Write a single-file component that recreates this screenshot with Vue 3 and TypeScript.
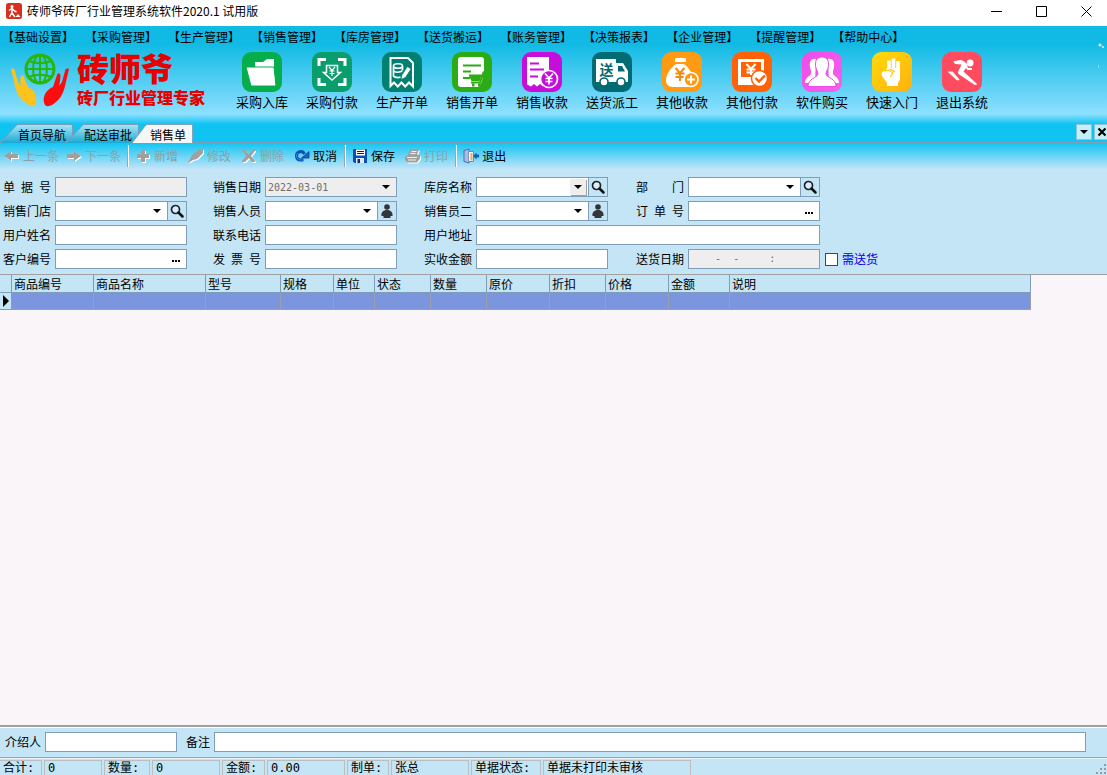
<script setup lang="ts">
import { ref } from 'vue'

interface Shape {
  d: string
  fill?: string
  stroke?: string
  width?: number
}

interface Glyph {
  t: string
  x: number
  y: number
  size: number
  fill: string
}

interface Tool {
  label: string
  from: string
  to: string
  shapes: Shape[]
  glyphs?: Glyph[]
}

interface Action {
  label: string
  icon: string
  disabled: boolean
}

type Kind = 'text' | 'select' | 'search' | 'person' | 'more'

interface Field {
  id: string
  label: string
  kind: Kind
  value?: string
  disabled?: boolean
  raised?: boolean
  wide?: boolean
}

const menus: string[] = [
  '基础设置', '采购管理', '生产管理', '销售管理', '库房管理', '送货搬运',
  '账务管理', '决策报表', '企业管理', '提醒管理', '帮助中心',
]

const W = '#fff'

const tools: Tool[] = [
  {
    label: '采购入库', from: '#06ad4d', to: '#06ad4d',
    shapes: [
      { d: 'M13 14V10h8l4-3h7v23h-4z', fill: W },
      { d: 'M4 15h28l2 19H9z', fill: W, stroke: '#06ad4d', width: 1 },
    ],
  },
  {
    label: '采购付款', from: '#0a9e6c', to: '#0a9e6c',
    shapes: [
      { d: 'M7 14V7.500h7M26 7.500h7V14M33 26v6.500h-7M14 32.500H7V26', stroke: W, width: 3 },
      { d: 'M14.500 13.500h11v7h3L20 28l-8.500-7.500h3z', stroke: W, width: 1.5 },
      { d: 'M17 15l3 3.500 3-3.500M20 18.500V24M17.500 19h5M17.500 21.500h5', stroke: W, width: 1.2 },
    ],
  },
  {
    label: '生产开单', from: '#008070', to: '#008070',
    shapes: [
      { d: 'M8.500 6h17.500l5 5v23.500l-4-4-3.800 4-3.700-4-3.700 4-3.800-4-3.500 3.500z', stroke: W, width: 2 },
      { d: 'M11.500 14c0-3 9-3 9 0s-9 3-9 0v9.500c0 2 5 2.500 7 1.500M20.500 14v4M11.500 18.500c1 2.300 7 2.300 9 0', stroke: W, width: 1.7 },
      { d: 'M25.500 14.500l3.500 2.500-5.500 8.500-4.500 2 .8-4.600z', fill: W, stroke: '#008070', width: 0.8 },
    ],
  },
  {
    label: '销售开单', from: '#2bab14', to: '#2bab14',
    shapes: [
      { d: 'M9 5h20a3 3 0 0 1 3 3v10l-2 11-3 6H9a3 3 0 0 1-3-3V8a3 3 0 0 1 3-3z', fill: W },
      { d: 'M11 13.500h18M11 19.500h8M11 26h7', stroke: '#2bab14', width: 2 },
      { d: 'M35 20.500h-3.500l-3.500 10H19', stroke: '#2bab14', width: 2 },
      { d: 'M16.500 22.500h13.500l-2.500 6.500h-8z', fill: '#2bab14' },
      { d: 'M20 33h2.500M26 33h2.500', stroke: '#2bab14', width: 3 },
    ],
  },
  {
    label: '销售收款', from: '#c60ddb', to: '#c60ddb',
    shapes: [
      { d: 'M5 5h22v29.500l-3-2.500-3 2.500-3-2.500-3 2.500-3-2.500-3 2.500-4-2z', fill: W },
      { d: 'M8 11.500h9M8 17.500h14M8 24.500h8', stroke: '#c60ddb', width: 2 },
      { d: 'M35.500 27a8.500 8.500 0 1 0-17 0a8.500 8.500 0 1 0 17 0z', fill: '#c60ddb', stroke: W, width: 1.7 },
      { d: 'M23 21.500l4 4.500 4-4.500M27 26v6.500M23.500 26.500h7M23.500 29.500h7', stroke: W, width: 1.7 },
    ],
  },
  {
    label: '送货派工', from: '#006b72', to: '#006b72',
    shapes: [
      { d: 'M4 7h20v4h7l5 8v11H4z', fill: W },
      { d: 'M26 14h4l3 5.500h-7z', fill: '#006b72' },
      { d: 'M16 30a4 4 0 1 0-8 0a4 4 0 1 0 8 0zM33 30a4 4 0 1 0-8 0a4 4 0 1 0 8 0z', fill: W, stroke: '#006b72', width: 1.6 },
    ],
    glyphs: [{ t: '送', x: 14.5, y: 22.5, size: 14, fill: '#006b72' }],
  },
  {
    label: '其他收款', from: '#ff9a12', to: '#ff9a12',
    shapes: [
      { d: 'M13 7c2-2 3 0 5-1s4 1 6 0v4H13z', fill: W },
      { d: 'M14 12h8c5 4 9 10 9 16 0 5-3 7-8 7H11c-5 0-7-3-7-7 0-6 5-12 10-16z', fill: W },
      { d: 'M13.500 16l4.500 5 4.500-5M18 21v8M13.500 21.500h9M13.500 25h9', stroke: '#f08a10', width: 2 },
      { d: 'M36 27.500a7 7 0 1 0-14 0a7 7 0 1 0 14 0z', fill: '#ff9a12', stroke: W, width: 1.6 },
      { d: 'M29 23.500v8M25 27.500h8', stroke: W, width: 2 },
    ],
  },
  {
    label: '其他付款', from: '#ff6206', to: '#ff6206',
    shapes: [
      { d: 'M7.500 8.500h23v23h-23z', stroke: W, width: 3 },
      { d: 'M9 25h21v8H9z', fill: W },
      { d: 'M14.500 12l4.500 5 4.500-5M19 17v6M14.500 17.500h9M14.500 20.500h9', stroke: W, width: 2 },
      { d: 'M35.500 26.500a8 8 0 1 0-16 0a8 8 0 1 0 16 0z', fill: W, stroke: '#ff6206', width: 1.5 },
      { d: 'M23.500 26l3.500 3.500 6-6', stroke: '#ff6206', width: 2.4 },
    ],
  },
  {
    label: '软件购买', from: '#ee4be8', to: '#f262ee',
    shapes: [
      { d: 'M14 7c-5-1-7 3-6 8 .5 3 1.500 4 1 6.500C8 25 3 25 3 31h10zM26 7c5-1 7 3 6 8-.5 3-1.500 4-1 6.500C32 25 37 25 37 31H27z', fill: W },
      { d: 'M20 5c5 0 7 4 6.500 8.500C26 18 24 19 24 22c.5 4 10 4 10 12.500H6C6 26 15.500 26 16 22c0-3-2-4-2.500-8.500C13 9 15 5 20 5z', fill: W, stroke: '#ee4be8', width: 1 },
    ],
  },
  {
    label: '快速入门', from: '#ffda08', to: '#ffb010',
    shapes: [
      { d: 'M17 18V8.500M21.500 17V6.500M26 18V9', stroke: W, width: 3.6 },
      { d: 'M15 16h13v11l-2 4v3H15v-3l-5-7c-1-4 1-5 3-5z', fill: W },
      { d: 'M12 19l5-1 4 3-3 4M18 17l5 3', stroke: '#ffc50b', width: 1.1 },
    ],
  },
  {
    label: '退出系统', from: '#ff4b60', to: '#ff4b60',
    shapes: [
      { d: 'M31.500 11a3.400 3.400 0 1 0-6.800 0a3.400 3.400 0 1 0 6.800 0z', fill: W },
      { d: 'M12 9l7-1c3 1 7 4 6.500 6l-4 5.500L35 32c0 1-2 1-3 .5L16.500 22c-1-2 0-4 1.500-6l1.500-3.500-6-.5c-1.500-1-2.500-2-1.500-3z', fill: W },
      { d: 'M5.500 19.500h5l7 8c0 1-2 1-3 .5z', fill: W },
      { d: 'M23 13l3 4h4', stroke: W, width: 2 },
    ],
  },
]

const tabs: string[] = ['首页导航', '配送审批', '销售单']
const activeTab = ref(2)

const actionGroups: Action[][] = [
  [
    { label: '上一条', icon: 'prev', disabled: true },
    { label: '下一条', icon: 'next', disabled: true },
  ],
  [
    { label: '新增', icon: 'add', disabled: true },
    { label: '修改', icon: 'edit', disabled: true },
    { label: '删除', icon: 'remove', disabled: true },
    { label: '取消', icon: 'cancel', disabled: false },
  ],
  [
    { label: '保存', icon: 'save', disabled: false },
    { label: '打印', icon: 'print', disabled: true },
  ],
  [{ label: '退出', icon: 'exit', disabled: false }],
]

const fieldRows: Field[][] = [
  [
    { id: 'bill-no', label: '单 据 号', kind: 'text', disabled: true },
    { id: 'sale-date', label: '销售日期', kind: 'select', value: '2022-03-01', disabled: true },
    { id: 'warehouse', label: '库房名称', kind: 'search', raised: true },
    { id: 'department', label: '部 门', kind: 'search' },
  ],
  [
    { id: 'store', label: '销售门店', kind: 'search' },
    { id: 'seller', label: '销售人员', kind: 'person' },
    { id: 'seller-2', label: '销售员二', kind: 'person' },
    { id: 'order-no', label: '订 单 号', kind: 'more' },
  ],
  [
    { id: 'customer', label: '用户姓名', kind: 'text' },
    { id: 'phone', label: '联系电话', kind: 'text' },
    { id: 'address', label: '用户地址', kind: 'text', wide: true },
  ],
  [
    { id: 'customer-no', label: '客户编号', kind: 'more' },
    { id: 'invoice-no', label: '发 票 号', kind: 'text' },
    { id: 'received', label: '实收金额', kind: 'text' },
    { id: 'delivery-date', label: '送货日期', kind: 'text', value: '    -  -     :', disabled: true },
  ],
]

const needsDelivery = ref(false)

const columns: { name: string; width: number }[] = [
  { name: '商品编号', width: 82 },
  { name: '商品名称', width: 112 },
  { name: '型号', width: 75 },
  { name: '规格', width: 53 },
  { name: '单位', width: 41 },
  { name: '状态', width: 56 },
  { name: '数量', width: 56 },
  { name: '原价', width: 63 },
  { name: '折扣', width: 56 },
  { name: '价格', width: 63 },
  { name: '金额', width: 61 },
  { name: '说明', width: 301 },
]

const panels: { text: string; width: number }[] = [
  { text: '合计:', width: 42 },
  { text: '0', width: 58 },
  { text: '数量:', width: 46 },
  { text: '0', width: 68 },
  { text: '金额:', width: 43 },
  { text: '0.00', width: 78 },
  { text: '制单:', width: 42 },
  { text: '张总', width: 78 },
  { text: '单据状态:', width: 70 },
  { text: '单据未打印未审核', width: 148 },
]
</script>

<template>
  <div class="window">
    <header class="titlebar">
      <svg class="app-icon" viewBox="0 0 16 16" aria-hidden="true">
        <rect width="16" height="16" rx="2.500" fill="#d8301f" />
        <circle cx="6" cy="3.500" r="1.500" fill="#fff" />
        <path d="M3 7.500l3-2 2.500 2.500 2 1M6 6v4l3 4M6 9.500L3.500 14" fill="none" stroke="#fff" stroke-width="1.500" />
        <path d="M9.500 14l2.500-3 2.500 3z" fill="#fff" />
      </svg>
      <h1>砖师爷砖厂行业管理系统软件2020.1 试用版</h1>
      <div class="window-controls">
        <button type="button" aria-label="最小化">
          <svg viewBox="0 0 11 11"><path d="M0 5.500h11" /></svg>
        </button>
        <button type="button" aria-label="最大化">
          <svg viewBox="0 0 11 11"><path d="M.5 .5h10v10H.5z" /></svg>
        </button>
        <button type="button" aria-label="关闭">
          <svg viewBox="0 0 11 11"><path d="M.5 .5l10 10M10.500 .5l-10 10" /></svg>
        </button>
      </div>
    </header>

    <div class="banner">
      <svg class="sparkle" viewBox="0 0 8 26" aria-hidden="true">
        <circle cx="2" cy="3" r="1.500" /><circle cx="5" cy="5" r="1" /><path d="M0 23h1v3H0z" opacity=".5" />
      </svg>
      <nav class="menu">
        <button v-for="m in menus" :key="m" type="button">【{{ m }}】</button>
      </nav>
      <div class="tool-row">
        <div class="brand">
          <svg class="brand-mark" viewBox="0 0 60 56" aria-hidden="true">
            <g fill="none" stroke="#2ab50a" stroke-width="2">
              <circle cx="30" cy="17" r="14" stroke-width="3" />
              <ellipse cx="30" cy="17" rx="7" ry="14" />
              <path d="M30 3v28M16 17h28M19 9c6 3 16 3 22 0M19 25c6-3 16-3 22 0" />
            </g>
            <path
              d="M1 17c2-1 4 0 4 2l3 11 3 4c-1-4-1-8 0-10 1-1 2-1 3 1l4 10c5 2 8 7 8 10 1 3 0 6-1 8-2 2-4 1-6 0C10 48 7 42 5 34z"
              fill="#fbc31c"
            />
            <path
              d="M59 17c-2-1-4 0-4 2l-3 11-3 4c1-4 2-10 1-12-1-1-2-1-3 1l-4 12c-5 2-8 6-9 10-1 3 0 6 1 8 2 2 4 1 7 0C50 48 53 42 55 34z"
              fill="#fb0d0d"
            />
          </svg>
          <div class="brand-text">
            <strong>砖师爷</strong>
            <span>砖厂行业管理专家</span>
          </div>
        </div>
        <button v-for="(t, i) in tools" :key="t.label" type="button" class="tool">
          <svg viewBox="0 0 40 40" aria-hidden="true">
            <defs>
              <linearGradient :id="'tool-' + i" x1="0" y1="0" x2="1" y2="1">
                <stop offset="0" :stop-color="t.from" />
                <stop offset="1" :stop-color="t.to" />
              </linearGradient>
            </defs>
            <rect width="40" height="40" rx="9" :fill="`url(#tool-${i})`" />
            <path
              v-for="(s, k) in t.shapes"
              :key="k"
              :d="s.d"
              :fill="s.fill ?? 'none'"
              :stroke="s.stroke ?? 'none'"
              :stroke-width="s.width ?? 0"
            />
            <text
              v-for="g in t.glyphs ?? []"
              :key="g.t"
              :x="g.x"
              :y="g.y"
              :font-size="g.size"
              :fill="g.fill"
              font-weight="700"
              text-anchor="middle"
            >{{ g.t }}</text>
          </svg>
          <span>{{ t.label }}</span>
        </button>
      </div>
    </div>

    <div class="tab-strip">
      <div class="tabs" role="tablist">
        <button
          v-for="(t, i) in tabs"
          :key="t"
          type="button"
          role="tab"
          class="tab"
          :class="{ active: activeTab === i }"
          :aria-selected="activeTab === i"
          @click="activeTab = i"
        >
          <svg class="tab-shape" viewBox="0 0 70 19" preserveAspectRatio="none" aria-hidden="true">
            <defs>
              <linearGradient id="tab-fill" x1="0" y1="0" x2="0" y2="1">
                <stop offset="0" stop-color="#a9e6f8" />
                <stop offset="1" stop-color="#19a9d3" />
              </linearGradient>
            </defs>
            <path
              d="M0 19L15 2Q16 .5 18 .5H68Q69.500 .5 69.500 2V19"
              :fill="activeTab === i ? '#f6f6f6' : 'url(#tab-fill)'"
              stroke="#7d9cb8"
            />
          </svg>
          <span>{{ t }}</span>
        </button>
      </div>
      <div class="tab-tools">
        <button type="button" aria-label="标签列表">
          <svg viewBox="0 0 14 14"><path d="M3 5h8l-4 4z" /></svg>
        </button>
        <button type="button" aria-label="关闭标签">
          <svg viewBox="0 0 14 14"><path d="M3.500 3.500l7 7M10.500 3.500l-7 7" stroke="#000" stroke-width="2.200" /></svg>
        </button>
      </div>
    </div>

    <div class="actions" role="toolbar">
      <div v-for="(g, gi) in actionGroups" :key="gi" class="action-group">
        <button v-for="a in g" :key="a.label" type="button" :disabled="a.disabled">
          <svg viewBox="0 0 16 16" aria-hidden="true">
            <path v-if="a.icon === 'prev'" class="etched" d="M0 8l7-5v3h7v4H7v3z" />
            <path v-else-if="a.icon === 'next'" class="etched" d="M15 8L8 3v3H1v4h7v3z" />
            <path v-else-if="a.icon === 'add'" class="etched" d="M6 2h4v4h4v4h-4v4H6v-4H2V6h4z" />
            <path v-else-if="a.icon === 'edit'" class="etched" d="M0 15l4-8 7-6h4v4l-6 6-4 1z" />
            <path v-else-if="a.icon === 'remove'" class="etched" d="M1 2h3l4 4 4-4h2v1l-4 5 4 5v1h-3l-3-4-4 4H1v-1l4-5z" />
            <g v-else-if="a.icon === 'cancel'">
              <path d="M9.500 12H6.500a4.200 4.200 0 1 1 4-6" fill="none" stroke="#0a4fb4" stroke-width="3" />
              <path d="M15 3.500V10H7.500z" fill="#1763d4" stroke="#0a3d93" stroke-width=".8" />
              <path d="M8.500 12h-2a4.200 4.200 0 0 1-3-7" fill="none" stroke="#2e8cf0" />
            </g>
            <g v-else-if="a.icon === 'save'">
              <path d="M1 1h14v14H2.500L1 13.500z" fill="#0b4fb3" />
              <path d="M4 1.500h9v6H4z" fill="#fff" />
              <path d="M5 3.500h7M5 5.500h7" stroke="#222" />
              <path d="M4 10h8v5H4z" fill="#dfe9f5" />
              <path d="M5.500 11h2.500v4H5.500z" fill="#0b2f6b" />
            </g>
            <g v-else-if="a.icon === 'print'">
              <path class="etched" d="M5 1.500h9l-2 5 3 1v3l-3 4H2L0 12V9l3-2z" />
              <path d="M6.500 3.500h5M5.500 5.500h5M2 9.500h10M3 12h8" stroke="#e6f4fb" />
            </g>
            <g v-else>
              <path d="M1 2.500l5-1.500v14l-5-1.500z" fill="#a9bce6" stroke="#536fae" />
              <path d="M6 3.500h4.500v10H6" fill="#f5f7fc" stroke="#7286b0" />
              <path d="M7.500 5v7.500h2V5z" fill="#e2b545" />
              <path d="M10 8l3.500-3.500V6.500H16v3h-2.500v2z" fill="#0a62c9" />
            </g>
          </svg>
          <span>{{ a.label }}</span>
        </button>
      </div>
    </div>

    <form class="form" @submit.prevent>
      <div v-for="(row, r) in fieldRows" :key="r" class="form-row">
        <template v-for="f in row" :key="f.id">
          <label :for="f.id" class="field-label">{{ f.label }}</label>
          <div class="field" :class="{ wide: f.wide, disabled: f.disabled }">
            <template v-if="f.kind === 'text' || f.kind === 'more'">
              <input :id="f.id" type="text" :value="f.value ?? ''" :disabled="f.disabled" autocomplete="off" />
              <button v-if="f.kind === 'more'" type="button" class="more" :aria-label="f.label + '选择'">
                <svg viewBox="0 0 18 18"><path d="M4 10h2v2H4zM7 10h2v2H7zM10 10h2v2h-2z" /></svg>
              </button>
            </template>
            <template v-else>
              <div class="combo">
                <select :id="f.id" :disabled="f.disabled">
                  <option>{{ f.value ?? '' }}</option>
                </select>
                <svg class="arrow" :class="{ raised: f.raised }" viewBox="0 0 16 16" aria-hidden="true">
                  <path d="M4 6h8l-4 4z" />
                </svg>
              </div>
              <button v-if="f.kind !== 'select'" type="button" class="lookup" :aria-label="f.label + '查找'">
                <svg v-if="f.kind === 'search'" viewBox="0 0 16 16">
                  <circle cx="6.500" cy="6.500" r="4" fill="#dcebf5" stroke="#1d2228" stroke-width="1.700" />
                  <path d="M9.500 9.500l4 4" fill="none" stroke="#111" stroke-width="2.500" stroke-linecap="round" />
                </svg>
                <svg v-else viewBox="0 0 16 16">
                  <circle cx="8" cy="4" r="2.800" fill="#2f3338" />
                  <path d="M8 7c4 0 6 2.500 5.500 6h-2v2h-7v-2h-2C2 9.500 4 7 8 7z" fill="#33373c" />
                </svg>
              </button>
            </template>
          </div>
        </template>
        <label v-if="r === fieldRows.length - 1" class="check">
          <input v-model="needsDelivery" type="checkbox" />
          <span>需送货</span>
        </label>
      </div>
    </form>

    <main class="grid-area">
      <table class="items">
        <colgroup>
          <col class="marker-col" />
          <col v-for="c in columns" :key="c.name" :style="{ width: c.width + 'px' }" />
        </colgroup>
        <thead>
          <tr>
            <th class="marker"></th>
            <th v-for="c in columns" :key="c.name" scope="col">{{ c.name }}</th>
          </tr>
        </thead>
        <tbody>
          <tr>
            <td class="marker">
              <svg viewBox="0 0 8 12" aria-hidden="true"><path d="M1 0v12l6-6z" /></svg>
            </td>
            <td v-for="c in columns" :key="c.name"></td>
          </tr>
        </tbody>
      </table>
    </main>

    <div class="notes">
      <label for="referrer">介绍人</label>
      <input id="referrer" type="text" class="referrer" autocomplete="off" />
      <label for="remark">备注</label>
      <input id="remark" type="text" class="remark" autocomplete="off" />
    </div>

    <footer class="status">
      <span v-for="(p, i) in panels" :key="i" class="panel" :style="{ width: p.width + 'px' }">{{ p.text }}</span>
      <svg class="grip" viewBox="0 0 12 12" aria-hidden="true">
        <path d="M9 1h2v2H9zM5 5h2v2H5zM9 5h2v2H9zM1 9h2v2H1zM5 9h2v2H5zM9 9h2v2H9z" />
      </svg>
    </footer>
  </div>
</template>

<style>
body {
  margin: 0;
}
</style>

<style scoped>
.window {
  --line: #7f9db9;
  --panel: #c4e5f5;
  display: flex;
  flex-direction: column;
  min-height: 100vh;
  overflow: hidden;
  background: #faf5f9;
  color: #000;
  font: 12px/16px "Noto Sans CJK SC", sans-serif;
}

button,
input,
select {
  box-sizing: border-box;
  margin: 0;
  padding: 0;
  border: 0;
  border-radius: 0;
  background: none;
  color: inherit;
  font: inherit;
  white-space: nowrap;
}

svg {
  display: block;
}

/* title bar */
.titlebar {
  display: flex;
  align-items: center;
  height: 26px;
  padding: 0 15px 4px 6px;
  box-sizing: border-box;
  background: #fff;
}

.app-icon {
  width: 16px;
  height: 16px;
}

h1 {
  flex: 1;
  margin: 0 0 0 5px;
  font-size: 12px;
  font-weight: 400;
}

.window-controls {
  display: flex;
  gap: 34px;
}

.window-controls svg {
  width: 11px;
  height: 11px;
  fill: none;
  stroke: #000;
}

/* banner with menu and large tools */
.banner {
  position: relative;
  height: 98px;
  background: linear-gradient(#11bae4 0, #11bae4 18px, #8ee0ff 88px, #10c4f2 98px);
}

.sparkle {
  position: absolute;
  top: 16px;
  right: 1px;
  width: 8px;
  height: 26px;
  fill: #dff6ff;
}

.menu {
  display: flex;
  gap: 11px;
  height: 22px;
  padding-left: 2px;
}

.tool-row {
  display: flex;
  align-items: flex-start;
  padding-top: 4px;
}

.brand {
  display: flex;
  gap: 7px;
  width: 217px;
  padding-left: 10px;
}

.brand-mark {
  width: 60px;
  height: 56px;
}

.brand-text {
  display: flex;
  flex-direction: column;
  gap: 6px;
  color: #e60000;
  font-weight: 900;
  white-space: nowrap;
}

.brand-text strong {
  font-size: 32px;
  font-weight: 900;
  line-height: 30px;
}

.brand-text span {
  font-size: 16px;
  line-height: 18px;
}

.tool {
  display: flex;
  flex-direction: column;
  align-items: center;
  width: 70px;
  font-size: 13px;
  line-height: 20px;
}

.tool svg {
  width: 40px;
  height: 40px;
}

/* tabs */
.tab-strip {
  display: flex;
  justify-content: space-between;
  height: 18px;
  border-bottom: 1px solid var(--line);
  background: #10c4f2;
}

.tabs {
  display: flex;
}

.tab {
  position: relative;
  height: 19px;
  padding: 2px 7px 0 18px;
}

.tab + .tab {
  margin-left: -7px;
}

.tab.active {
  z-index: 1;
}

.tab-shape {
  position: absolute;
  inset: 0;
  width: 100%;
  height: 19px;
}

.tab span {
  position: relative;
}

.tab-tools {
  display: flex;
  gap: 2px;
  margin-right: -3px;
}

.tab-tools button {
  width: 16px;
  height: 16px;
  border: 1px solid #8fc3dc;
  background: #c3eff9;
}

.tab-tools svg {
  width: 14px;
  height: 14px;
}

/* action toolbar */
.actions {
  display: flex;
  align-items: flex-start;
  box-sizing: border-box;
  height: 27px;
  padding-top: 2px;
  background: linear-gradient(#12c5f2, #c8e5f8);
}

.action-group {
  display: flex;
  align-items: center;
  gap: 10px;
  height: 22px;
  padding: 0 7px;
}

.action-group:first-child {
  gap: 7px;
  padding: 0 6px 0 4px;
}

.action-group + .action-group {
  border-left: 1px solid #9aa5ac;
  box-shadow: inset 1px 0 #fff;
}

.action-group button {
  display: flex;
  align-items: center;
  gap: 3px;
}

.action-group button:disabled {
  color: #8fa0a8;
}

.action-group svg {
  width: 16px;
  height: 16px;
}

.etched {
  fill: #a0a0a0;
  filter: drop-shadow(1px 1px 0 #fff);
}

/* form */
.form {
  display: flex;
  flex-direction: column;
  gap: 4px;
  padding: 7px 0 5px 2px;
  border-bottom: 1px solid #a0a0a0;
  background: var(--panel);
}

.form-row {
  display: grid;
  grid-template-columns: 53px 132px 78px 132px 79px 132px 80px 132px auto;
  grid-auto-rows: 20px;
}

.field-label {
  justify-self: end;
  width: 48px;
  margin-right: 4px;
  line-height: 20px;
  text-align: justify;
  text-align-last: justify;
}

.field {
  display: flex;
  box-sizing: border-box;
  border: 1px solid var(--line);
  background: #fff;
}

.field.wide {
  grid-column: span 3;
}

.field.disabled {
  background: #eee;
  color: #6d6d6d;
}

.field input,
.field select {
  flex: 1;
  width: 100%;
  min-width: 0;
  height: 18px;
  padding: 0 2px;
  appearance: none;
  opacity: 1;
  font: 10px/18px "DejaVu Sans Mono", "Noto Sans CJK SC", monospace;
}

.combo {
  position: relative;
  flex: 1;
}

.arrow {
  position: absolute;
  top: 1px;
  right: 2px;
  width: 16px;
  height: 16px;
  pointer-events: none;
}

.arrow.raised {
  background: #eee;
  box-shadow: 1px 1px #a0a0a0;
}

.more svg {
  width: 18px;
  height: 18px;
}

.lookup {
  width: 19px;
  padding-left: 1px;
  border-left: 1px solid var(--line);
  background: var(--panel);
}

.lookup svg {
  width: 16px;
  height: 16px;
}

.check {
  display: flex;
  align-items: center;
  gap: 4px;
  padding-left: 5px;
  color: #0000f0;
}

.check input {
  width: 13px;
  height: 13px;
  border: 1px solid #1c5180;
  background: #fff;
  appearance: none;
}

.check input:checked {
  box-shadow: inset 0 0 0 2px #fff;
  background: #21a121;
}

/* item grid */
.grid-area {
  flex: 1;
  overflow: hidden;
}

.items {
  width: 1031px;
  border-spacing: 0;
  table-layout: fixed;
}

.marker-col {
  width: 12px;
}

th,
td {
  box-sizing: border-box;
  height: 17px;
  padding: 0 0 0 2px;
  border-right: 1px solid var(--line);
  border-bottom: 1px solid var(--line);
  background: var(--panel);
  font-weight: 400;
  line-height: 16px;
  text-align: left;
}

th {
  height: 18px;
}

td {
  border-color: #9a9fae;
  background: #7b96de;
}

td.marker {
  border-color: var(--line);
  background: var(--panel);
}

td.marker svg {
  width: 8px;
  height: 12px;
}

/* bottom notes */
.notes {
  display: flex;
  align-items: center;
  height: 30px;
  padding: 0 21px 0 5px;
  border-top: 2px solid #a0a0a0;
  border-bottom: 1px solid #a0a0a0;
  background: var(--panel);
  box-shadow: inset 0 1px #fff;
}

.notes input {
  height: 20px;
  padding: 0 3px;
  border: 1px solid var(--line);
  background: #fff;
}

.referrer {
  width: 132px;
  margin: 0 9px 0 4px;
}

.remark {
  flex: 1;
  margin-left: 4px;
}

/* status bar */
.status {
  display: flex;
  gap: 2px;
  height: 15px;
  padding-top: 2px;
  background: var(--panel);
  box-shadow: inset 0 1px #e9f5fb;
  font-family: "DejaVu Sans Mono", "Noto Sans CJK SC", monospace;
}

.panel {
  box-sizing: border-box;
  flex: none;
  padding-left: 3px;
  border: 1px solid #bdbdbd;
  border-bottom: 0;
  line-height: 15px;
  white-space: nowrap;
}

.panel:first-child {
  border-left: 0;
}

.grip {
  width: 12px;
  height: 12px;
  margin: 3px 0 0 auto;
  fill: #9a9a9a;
}
</style>
